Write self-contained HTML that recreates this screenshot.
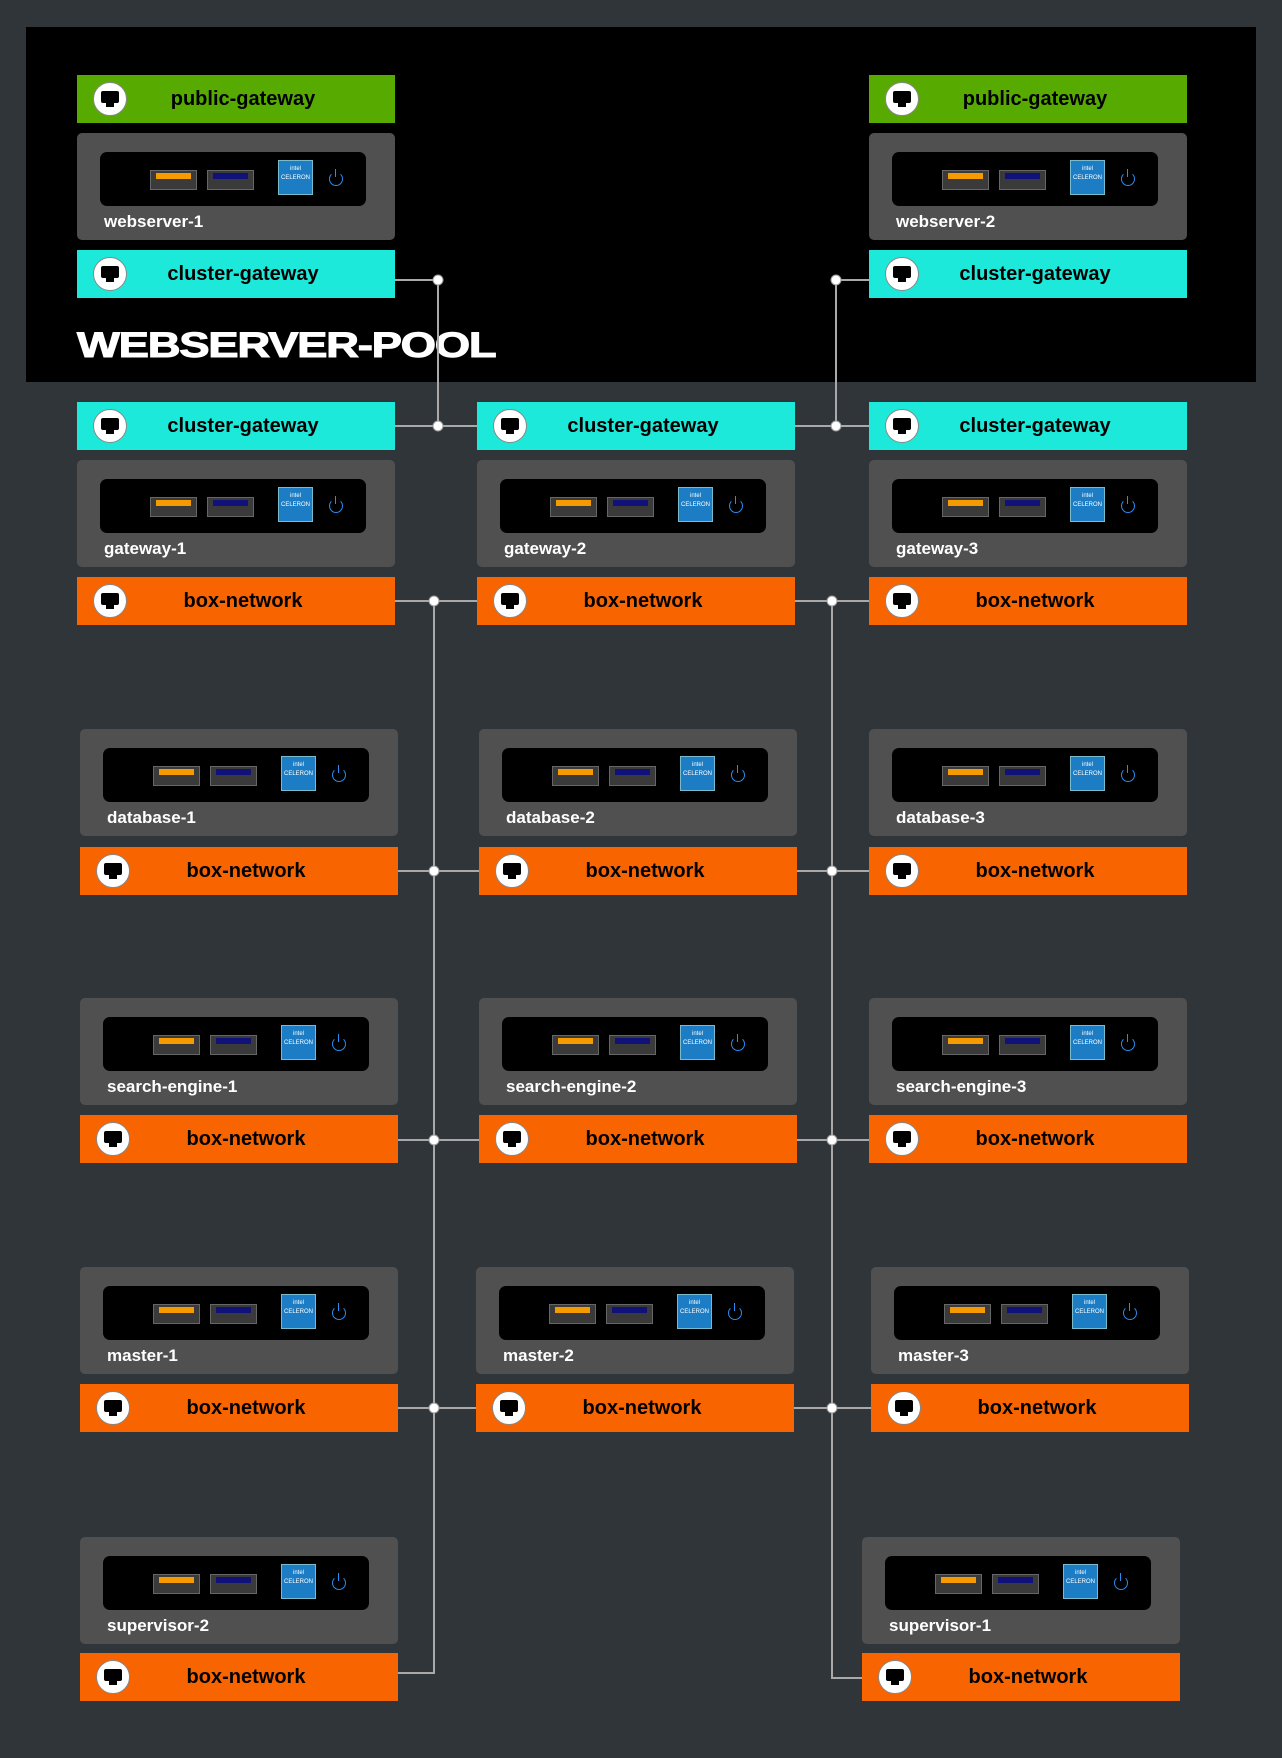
<!DOCTYPE html>
<html><head><meta charset="utf-8"><style>
body{margin:0;width:1282px;height:1758px;background:#30353a;position:relative;overflow:hidden;font-family:"Liberation Sans",sans-serif}
.pool{position:absolute;left:26px;top:27px;width:1230px;height:355px;background:#000}
.title{position:absolute;left:77px;top:326px;font-weight:900;font-size:35px;color:#fff;transform:scaleX(1.3);transform-origin:0 0;letter-spacing:-1px;line-height:40px;-webkit-text-stroke:1px #fff}
.bar{position:absolute;width:318px;height:48px}
.bar .ic{position:absolute;left:16px;top:7px;width:32px;height:32px;border-radius:50%;background:#fff;border:1px solid #888}
.bar .ic:before{content:"";position:absolute;left:7px;top:8px;width:18px;height:12px;background:#000;border-radius:2px}
.bar .ic:after{content:"";position:absolute;left:12px;top:20px;width:8px;height:4px;background:#000}
.bar span{position:absolute;left:14px;right:0;top:0;line-height:48px;text-align:center;font-weight:bold;font-size:20px;color:#000}
.g{background:#57ab00}.c{background:#1de9da}.o{background:#f86400}
.srv{position:absolute;width:318px;height:107px;background:#505050;border-radius:5px}
.in{position:absolute;left:23px;top:19px;width:266px;height:54px;background:#000;border-radius:7px}
.p1,.p2{position:absolute;top:18px;width:45px;height:18px;background:#3a3a3a;border:1px solid #666}
.p1{left:50px}.p2{left:107px}
.p1:after,.p2:after{content:"";position:absolute;left:5px;top:2px;width:35px;height:6px}
.p1:after{background:#f59a00}.p2:after{background:#11117a}
.intel{position:absolute;left:178px;top:8px;width:35px;height:35px;background:#1c7cc4;border:1px solid #7bc;box-sizing:border-box;color:#fff;font-size:6px;text-align:center;line-height:9px;padding-top:4px}
.pw{position:absolute;left:229px;top:20px;width:12px;height:12px;border:1.5px solid #2a8cf0;border-radius:50%;border-top-color:transparent}
.pw:after{content:"";position:absolute;left:4.5px;top:-4px;width:1.5px;height:8px;background:#2a8cf0}
.lbl{position:absolute;left:27px;top:79px;color:#fff;font-weight:bold;font-size:17px}
svg{position:absolute;left:0;top:0}
</style></head><body>
<div class="pool"></div>
<div class="title">WEBSERVER-POOL</div>
<svg width="1282" height="1758">
<g stroke="#a9a9a9" stroke-width="2" fill="none">
<path d="M395 280H438V426M395 426H477M869 280H836V426M795 426H869"/>
<path d="M395 601H477M795 601H869M434 601V1673H398M832 601V1678H862"/>
<path d="M398 871H479M797 871H869M398 1140H479M797 1140H869M398 1408H476M794 1408H871"/>
</g>
<g fill="#fff" stroke="#999" stroke-width="1">
<circle cx="438" cy="280" r="5"/><circle cx="836" cy="280" r="5"/><circle cx="438" cy="426" r="5"/><circle cx="836" cy="426" r="5"/>
<circle cx="434" cy="601" r="5"/><circle cx="832" cy="601" r="5"/><circle cx="434" cy="871" r="5"/><circle cx="832" cy="871" r="5"/>
<circle cx="434" cy="1140" r="5"/><circle cx="832" cy="1140" r="5"/><circle cx="434" cy="1408" r="5"/><circle cx="832" cy="1408" r="5"/>
</g></svg>

<div class="bar g" style="left:77px;top:75px"><div class="ic"></div><span>public-gateway</span></div>
<div class="srv" style="left:77px;top:133px"><div class="in"><div class="p1"></div><div class="p2"></div><div class="intel">intel<br>CELERON</div><div class="pw"></div></div><div class="lbl">webserver-1</div></div>
<div class="bar c" style="left:77px;top:250px"><div class="ic"></div><span>cluster-gateway</span></div>

<div class="bar g" style="left:869px;top:75px"><div class="ic"></div><span>public-gateway</span></div>
<div class="srv" style="left:869px;top:133px"><div class="in"><div class="p1"></div><div class="p2"></div><div class="intel">intel<br>CELERON</div><div class="pw"></div></div><div class="lbl">webserver-2</div></div>
<div class="bar c" style="left:869px;top:250px"><div class="ic"></div><span>cluster-gateway</span></div>

<div class="bar c" style="left:77px;top:402px"><div class="ic"></div><span>cluster-gateway</span></div>
<div class="bar c" style="left:477px;top:402px"><div class="ic"></div><span>cluster-gateway</span></div>
<div class="bar c" style="left:869px;top:402px"><div class="ic"></div><span>cluster-gateway</span></div>
<div class="srv" style="left:77px;top:460px"><div class="in"><div class="p1"></div><div class="p2"></div><div class="intel">intel<br>CELERON</div><div class="pw"></div></div><div class="lbl">gateway-1</div></div>
<div class="srv" style="left:477px;top:460px"><div class="in"><div class="p1"></div><div class="p2"></div><div class="intel">intel<br>CELERON</div><div class="pw"></div></div><div class="lbl">gateway-2</div></div>
<div class="srv" style="left:869px;top:460px"><div class="in"><div class="p1"></div><div class="p2"></div><div class="intel">intel<br>CELERON</div><div class="pw"></div></div><div class="lbl">gateway-3</div></div>
<div class="bar o" style="left:77px;top:577px"><div class="ic"></div><span>box-network</span></div>
<div class="bar o" style="left:477px;top:577px"><div class="ic"></div><span>box-network</span></div>
<div class="bar o" style="left:869px;top:577px"><div class="ic"></div><span>box-network</span></div>

<div class="srv" style="left:80px;top:729px"><div class="in"><div class="p1"></div><div class="p2"></div><div class="intel">intel<br>CELERON</div><div class="pw"></div></div><div class="lbl">database-1</div></div>
<div class="srv" style="left:479px;top:729px"><div class="in"><div class="p1"></div><div class="p2"></div><div class="intel">intel<br>CELERON</div><div class="pw"></div></div><div class="lbl">database-2</div></div>
<div class="srv" style="left:869px;top:729px"><div class="in"><div class="p1"></div><div class="p2"></div><div class="intel">intel<br>CELERON</div><div class="pw"></div></div><div class="lbl">database-3</div></div>
<div class="bar o" style="left:80px;top:847px"><div class="ic"></div><span>box-network</span></div>
<div class="bar o" style="left:479px;top:847px"><div class="ic"></div><span>box-network</span></div>
<div class="bar o" style="left:869px;top:847px"><div class="ic"></div><span>box-network</span></div>

<div class="srv" style="left:80px;top:998px"><div class="in"><div class="p1"></div><div class="p2"></div><div class="intel">intel<br>CELERON</div><div class="pw"></div></div><div class="lbl">search-engine-1</div></div>
<div class="srv" style="left:479px;top:998px"><div class="in"><div class="p1"></div><div class="p2"></div><div class="intel">intel<br>CELERON</div><div class="pw"></div></div><div class="lbl">search-engine-2</div></div>
<div class="srv" style="left:869px;top:998px"><div class="in"><div class="p1"></div><div class="p2"></div><div class="intel">intel<br>CELERON</div><div class="pw"></div></div><div class="lbl">search-engine-3</div></div>
<div class="bar o" style="left:80px;top:1115px"><div class="ic"></div><span>box-network</span></div>
<div class="bar o" style="left:479px;top:1115px"><div class="ic"></div><span>box-network</span></div>
<div class="bar o" style="left:869px;top:1115px"><div class="ic"></div><span>box-network</span></div>

<div class="srv" style="left:80px;top:1267px"><div class="in"><div class="p1"></div><div class="p2"></div><div class="intel">intel<br>CELERON</div><div class="pw"></div></div><div class="lbl">master-1</div></div>
<div class="srv" style="left:476px;top:1267px"><div class="in"><div class="p1"></div><div class="p2"></div><div class="intel">intel<br>CELERON</div><div class="pw"></div></div><div class="lbl">master-2</div></div>
<div class="srv" style="left:871px;top:1267px"><div class="in"><div class="p1"></div><div class="p2"></div><div class="intel">intel<br>CELERON</div><div class="pw"></div></div><div class="lbl">master-3</div></div>
<div class="bar o" style="left:80px;top:1384px"><div class="ic"></div><span>box-network</span></div>
<div class="bar o" style="left:476px;top:1384px"><div class="ic"></div><span>box-network</span></div>
<div class="bar o" style="left:871px;top:1384px"><div class="ic"></div><span>box-network</span></div>

<div class="srv" style="left:80px;top:1537px"><div class="in"><div class="p1"></div><div class="p2"></div><div class="intel">intel<br>CELERON</div><div class="pw"></div></div><div class="lbl">supervisor-2</div></div>
<div class="srv" style="left:862px;top:1537px"><div class="in"><div class="p1"></div><div class="p2"></div><div class="intel">intel<br>CELERON</div><div class="pw"></div></div><div class="lbl">supervisor-1</div></div>
<div class="bar o" style="left:80px;top:1653px"><div class="ic"></div><span>box-network</span></div>
<div class="bar o" style="left:862px;top:1653px"><div class="ic"></div><span>box-network</span></div>
</body></html>
